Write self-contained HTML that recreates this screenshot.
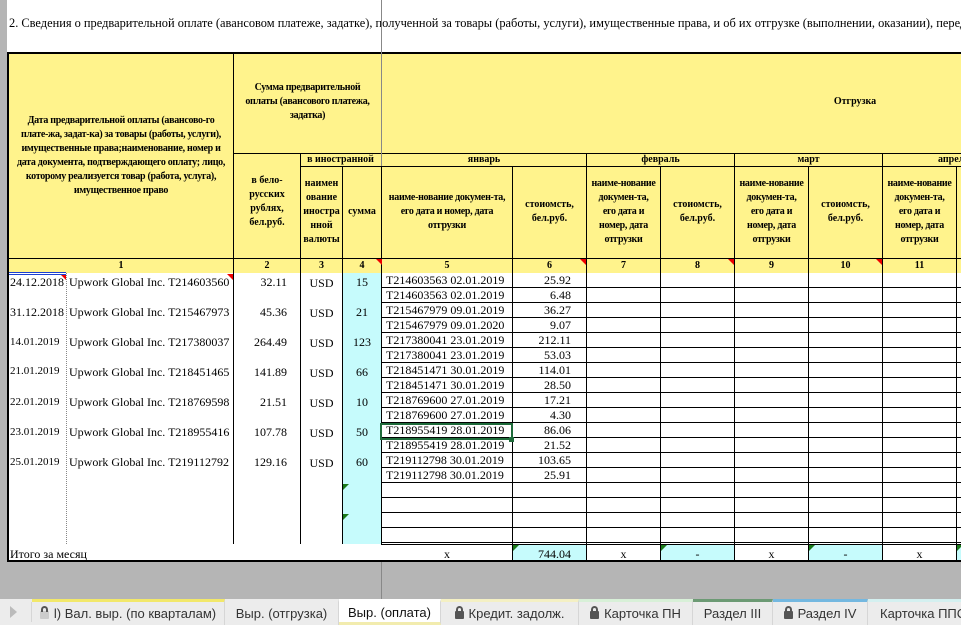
<!DOCTYPE html>
<html><head><meta charset="utf-8"><style>
*{margin:0;padding:0;box-sizing:border-box}
html,body{width:961px;height:625px;overflow:hidden}
body{background:#fff;position:relative;font-family:"Liberation Serif",serif;color:#000}
div{position:absolute}
.y{background:#fff38c}
.c{background:#c6fbfc}
.h{font-weight:bold;font-size:10px;line-height:14px;text-align:center;display:flex;align-items:center;justify-content:center;padding:0 2px}
.n{letter-spacing:-0.3px}
.vl{width:1px;background:#000}
.hl{height:1px;background:#000}
.t{font-size:12px;line-height:14px;white-space:nowrap}
.s{font-size:11px}
.tab{top:599px;height:26px;font-family:"Liberation Sans",sans-serif;font-size:13px;color:#333;line-height:24px;text-align:center;border-right:1px solid #d6d6d6;border-top:3px solid transparent;white-space:nowrap;overflow:hidden}
.red{width:0;height:0;border-top:6px solid #e00;border-left:6px solid transparent}
.grn{width:0;height:0;border-top:6px solid #1a7a1a;border-right:6px solid transparent}
.lock{display:inline-block;width:9px;height:8px;background:#555;border-radius:1px;position:relative;margin-right:5px;vertical-align:-1px}
.lock:before{content:"";position:absolute;left:1px;top:-5px;width:3px;height:4px;border:2px solid #555;border-bottom:none;border-radius:4px 4px 0 0}
</style></head><body>
<div style="left:0;top:0;width:7px;height:599px;background:#b5b5b5"></div>
<div class="t" style="left:9px;top:16px;font-size:12.4px;width:952px;overflow:hidden">2. Сведения о предварительной оплате (авансовом платеже, задатке), полученной за товары (работы, услуги), имущественные права, и об их отгрузке (выполнении, оказании), передаче:</div>
<div style="left:0;top:562px;width:961px;height:37px;background:#b5b5b5"></div>
<div class="y" style="left:7px;top:52px;width:954px;height:221px"></div>
<div class="c" style="left:342px;top:273px;width:39px;height:271px"></div>
<div class="c" style="left:512px;top:545px;width:74px;height:16px"></div>
<div class="c" style="left:660px;top:545px;width:74px;height:16px"></div>
<div class="c" style="left:808px;top:545px;width:74px;height:16px"></div>
<div class="c" style="left:956px;top:545px;width:5px;height:16px"></div>
<div class="hl" style="left:7px;top:52px;width:954px;height:2px"></div>
<div class="vl" style="left:7px;top:52px;height:510px;width:2px"></div>
<div class="hl" style="left:7px;top:560px;width:954px;height:2px"></div>
<div class="vl" style="left:233px;top:52px;height:492px"></div>
<div class="hl" style="left:233px;top:153px;width:728px"></div>
<div class="vl" style="left:300px;top:153px;height:391px"></div>
<div class="hl" style="left:300px;top:166px;width:661px"></div>
<div class="vl" style="left:342px;top:166px;height:378px"></div>
<div class="hl" style="left:7px;top:258px;width:954px"></div>
<div class="vl" style="left:381px;top:166px;height:379px"></div>
<div class="vl" style="left:512px;top:166px;height:395px"></div>
<div class="vl" style="left:586px;top:153px;height:408px"></div>
<div class="vl" style="left:660px;top:166px;height:395px"></div>
<div class="vl" style="left:734px;top:153px;height:408px"></div>
<div class="vl" style="left:808px;top:166px;height:395px"></div>
<div class="vl" style="left:882px;top:153px;height:408px"></div>
<div class="vl" style="left:956px;top:166px;height:395px"></div>
<div style="left:66px;top:273px;width:0;height:271px;border-left:1px dotted #888"></div>
<div style="left:381px;top:273px;width:580px;height:272px;background:repeating-linear-gradient(to bottom,transparent 0,transparent 14px,#000 14px,#000 15px)"></div>
<div class="hl" style="left:381px;top:544px;width:580px"></div>
<div style="left:381px;top:0;width:1px;height:166px;background:#888"></div>
<div style="left:381px;top:562px;width:1px;height:37px;background:#888"></div>
<div class="h n" style="left:9px;top:54px;width:224px;height:204px;padding:0 6px">Дата предварительной оплаты (авансово-го плате-жа, задат-ка) за товары (работы, услуги), имущественные права;наименование, номер и дата документа, подтверждающего оплату; лицо, которому реализуется товар (работа, услуга), имущественное право</div>
<div class="h n" style="left:234px;top:78px;width:147px;height:48px;padding:0 6px">Сумма предварительной оплаты (авансового платежа, задатка)</div>
<div class="h" style="left:800px;top:94px;width:110px;height:16px">Отгрузка</div>
<div class="h" style="left:300px;top:153px;width:81px;height:13px">в иностранной</div>
<div class="h" style="left:382px;top:153px;width:204px;height:13px">январь</div>
<div class="h" style="left:587px;top:153px;width:147px;height:13px">февраль</div>
<div class="h" style="left:735px;top:153px;width:147px;height:13px">март</div>
<div class="h" style="left:883px;top:153px;width:100px;height:13px;justify-content:flex-start;padding-left:55px">апрель</div>
<div class="h" style="left:234px;top:167px;width:66px;height:70px;padding:0 10px">в бело-русских рублях, бел.руб.</div>
<div class="h" style="left:301px;top:167px;width:41px;height:90px;padding:0">наимен ование иностра нной валюты</div>
<div class="h" style="left:343px;top:167px;width:38px;height:90px">сумма</div>
<div class="h n" style="left:382px;top:167px;width:130px;height:90px;padding:0 6px">наиме-нование докумен-та, его дата и номер, дата отгрузки</div>
<div class="h" style="left:513px;top:167px;width:73px;height:90px;padding:0 8px">стоиомсть, бел.руб.</div>
<div class="h n" style="left:587px;top:167px;width:73px;height:90px;padding:0 4px">наиме-нование докумен-та, его дата и номер, дата отгрузки</div>
<div class="h" style="left:661px;top:167px;width:73px;height:90px;padding:0 8px">стоиомсть, бел.руб.</div>
<div class="h n" style="left:735px;top:167px;width:73px;height:90px;padding:0 4px">наиме-нование докумен-та, его дата и номер, дата отгрузки</div>
<div class="h" style="left:809px;top:167px;width:73px;height:90px;padding:0 8px">стоиомсть, бел.руб.</div>
<div class="h n" style="left:883px;top:167px;width:73px;height:90px;padding:0 4px">наиме-нование докумен-та, его дата и номер, дата отгрузки</div>
<div class="h" style="left:9px;top:259px;width:224px;height:14px">1</div>
<div class="h" style="left:234px;top:259px;width:66px;height:14px">2</div>
<div class="h" style="left:301px;top:259px;width:41px;height:14px">3</div>
<div class="h" style="left:343px;top:259px;width:38px;height:14px">4</div>
<div class="h" style="left:382px;top:259px;width:130px;height:14px">5</div>
<div class="h" style="left:513px;top:259px;width:73px;height:14px">6</div>
<div class="h" style="left:587px;top:259px;width:73px;height:14px">7</div>
<div class="h" style="left:661px;top:259px;width:73px;height:14px">8</div>
<div class="h" style="left:735px;top:259px;width:73px;height:14px">9</div>
<div class="h" style="left:809px;top:259px;width:73px;height:14px">10</div>
<div class="h" style="left:883px;top:259px;width:73px;height:14px">11</div>
<div class="red" style="left:376px;top:259px"></div>
<div class="red" style="left:580px;top:259px"></div>
<div class="red" style="left:728px;top:259px"></div>
<div class="red" style="left:876px;top:259px"></div>
<div class="red" style="left:60px;top:274px"></div>
<div class="red" style="left:227px;top:274px"></div>
<div style="left:9px;top:272px;width:57px;height:3px;border-top:1px solid #1a3fd0;border-bottom:1px solid #1a3fd0"></div>
<div class="t" style="left:10px;top:275px">24.12.2018</div>
<div class="t" style="left:10px;top:305px">31.12.2018</div>
<div class="t s" style="left:10px;top:335px">14.01.2019</div>
<div class="t s" style="left:10px;top:364px">21.01.2019</div>
<div class="t s" style="left:10px;top:395px">22.01.2019</div>
<div class="t s" style="left:10px;top:425px">23.01.2019</div>
<div class="t s" style="left:10px;top:455px">25.01.2019</div>
<div class="t" style="left:69px;top:275px">Upwork Global Inc. T214603560</div>
<div class="t" style="left:69px;top:305px">Upwork Global Inc. T215467973</div>
<div class="t" style="left:69px;top:335px">Upwork Global Inc. T217380037</div>
<div class="t" style="left:69px;top:365px">Upwork Global Inc. T218451465</div>
<div class="t" style="left:69px;top:395px">Upwork Global Inc. T218769598</div>
<div class="t" style="left:69px;top:425px">Upwork Global Inc. T218955416</div>
<div class="t" style="left:69px;top:455px">Upwork Global Inc. T219112792</div>
<div class="t" style="left:234px;top:275px;width:53px;text-align:right">32.11</div>
<div class="t" style="left:234px;top:305px;width:53px;text-align:right">45.36</div>
<div class="t" style="left:234px;top:335px;width:53px;text-align:right">264.49</div>
<div class="t" style="left:234px;top:365px;width:53px;text-align:right">141.89</div>
<div class="t" style="left:234px;top:395px;width:53px;text-align:right">21.51</div>
<div class="t" style="left:234px;top:425px;width:53px;text-align:right">107.78</div>
<div class="t" style="left:234px;top:455px;width:53px;text-align:right">129.16</div>
<div class="t" style="left:301px;top:276px;width:41px;text-align:center">USD</div>
<div class="t" style="left:301px;top:306px;width:41px;text-align:center">USD</div>
<div class="t" style="left:301px;top:336px;width:41px;text-align:center">USD</div>
<div class="t" style="left:301px;top:366px;width:41px;text-align:center">USD</div>
<div class="t" style="left:301px;top:396px;width:41px;text-align:center">USD</div>
<div class="t" style="left:301px;top:426px;width:41px;text-align:center">USD</div>
<div class="t" style="left:301px;top:456px;width:41px;text-align:center">USD</div>
<div class="t" style="left:343px;top:275px;width:38px;text-align:center">15</div>
<div class="t" style="left:343px;top:305px;width:38px;text-align:center">21</div>
<div class="t" style="left:343px;top:335px;width:38px;text-align:center">123</div>
<div class="t" style="left:343px;top:365px;width:38px;text-align:center">66</div>
<div class="t" style="left:343px;top:395px;width:38px;text-align:center">10</div>
<div class="t" style="left:343px;top:425px;width:38px;text-align:center">50</div>
<div class="t" style="left:343px;top:455px;width:38px;text-align:center">60</div>
<div class="grn" style="left:343px;top:484px"></div>
<div class="grn" style="left:343px;top:514px"></div>
<div class="t" style="left:386px;top:273px">T214603563 02.01.2019</div>
<div class="t" style="left:386px;top:288px">T214603563 02.01.2019</div>
<div class="t" style="left:386px;top:303px">T215467979 09.01.2019</div>
<div class="t" style="left:386px;top:318px">T215467979 09.01.2020</div>
<div class="t" style="left:386px;top:333px">T217380041 23.01.2019</div>
<div class="t" style="left:386px;top:348px">T217380041 23.01.2019</div>
<div class="t" style="left:386px;top:363px">T218451471 30.01.2019</div>
<div class="t" style="left:386px;top:378px">T218451471 30.01.2019</div>
<div class="t" style="left:386px;top:393px">T218769600 27.01.2019</div>
<div class="t" style="left:386px;top:408px">T218769600 27.01.2019</div>
<div class="t" style="left:386px;top:423px">T218955419 28.01.2019</div>
<div class="t" style="left:386px;top:438px">T218955419 28.01.2019</div>
<div class="t" style="left:386px;top:453px">T219112798 30.01.2019</div>
<div class="t" style="left:386px;top:468px">T219112798 30.01.2019</div>
<div class="t" style="left:513px;top:273px;width:58px;text-align:right">25.92</div>
<div class="t" style="left:513px;top:288px;width:58px;text-align:right">6.48</div>
<div class="t" style="left:513px;top:303px;width:58px;text-align:right">36.27</div>
<div class="t" style="left:513px;top:318px;width:58px;text-align:right">9.07</div>
<div class="t" style="left:513px;top:333px;width:58px;text-align:right">212.11</div>
<div class="t" style="left:513px;top:348px;width:58px;text-align:right">53.03</div>
<div class="t" style="left:513px;top:363px;width:58px;text-align:right">114.01</div>
<div class="t" style="left:513px;top:378px;width:58px;text-align:right">28.50</div>
<div class="t" style="left:513px;top:393px;width:58px;text-align:right">17.21</div>
<div class="t" style="left:513px;top:408px;width:58px;text-align:right">4.30</div>
<div class="t" style="left:513px;top:423px;width:58px;text-align:right">86.06</div>
<div class="t" style="left:513px;top:438px;width:58px;text-align:right">21.52</div>
<div class="t" style="left:513px;top:453px;width:58px;text-align:right">103.65</div>
<div class="t" style="left:513px;top:468px;width:58px;text-align:right">25.91</div>
<div style="left:380px;top:423px;width:133px;height:17px;border:2px solid #1e6b3a"></div>
<div style="left:509px;top:437px;width:5px;height:5px;background:#1e6b3a"></div>
<div class="t" style="left:10px;top:547px">Итого за месяц</div>
<div class="t" style="left:382px;top:547px;width:130px;text-align:center">x</div>
<div class="t" style="left:513px;top:547px;width:58px;text-align:right">744.04</div>
<div class="t" style="left:587px;top:547px;width:73px;text-align:center">x</div>
<div class="t" style="left:661px;top:547px;width:73px;text-align:center">-</div>
<div class="t" style="left:735px;top:547px;width:73px;text-align:center">x</div>
<div class="t" style="left:809px;top:547px;width:73px;text-align:center">-</div>
<div class="t" style="left:883px;top:547px;width:73px;text-align:center">x</div>
<div class="grn" style="left:513px;top:545px"></div>
<div class="grn" style="left:661px;top:545px"></div>
<div class="grn" style="left:809px;top:545px"></div>
<div class="grn" style="left:957px;top:545px"></div>
<div style="left:0;top:599px;width:961px;height:26px;background:#ececec"></div>
<div style="left:10px;top:606px;width:0;height:0;border-left:7px solid #bbb;border-top:6px solid transparent;border-bottom:6px solid transparent"></div>
<div style="left:31px;top:602px;width:1px;height:20px;background:#d6d6d6"></div>
<div class="tab" style="left:32px;width:193px;border-top-color:#f2e86a"><span class="lock" style="background:#ccc"></span>l) Вал. выр. (по кварталам)</div>
<div class="tab" style="left:225px;width:114px">Выр. (отгрузка)</div>
<div class="tab" style="left:339px;width:102px;background:#fff;color:#111;border-top-color:#fff;border-bottom:3px solid #f2ecae;line-height:21px">Выр. (оплата)</div>
<div class="tab" style="left:441px;width:138px;border-top-color:#f4f0c4"><span class="lock"></span>Кредит. задолж.</div>
<div class="tab" style="left:579px;width:114px;border-top-color:#d8f0d8"><span class="lock"></span>Карточка ПН</div>
<div class="tab" style="left:693px;width:80px;border-top-color:#6c9a74">Раздел III</div>
<div class="tab" style="left:773px;width:95px;border-top-color:#74b8e0"><span class="lock"></span>Раздел IV</div>
<div class="tab" style="left:868px;width:93px;border-top-color:#d4f0f0;text-align:left;padding-left:12px;border-right:none">Карточка ППС</div>
</body></html>
